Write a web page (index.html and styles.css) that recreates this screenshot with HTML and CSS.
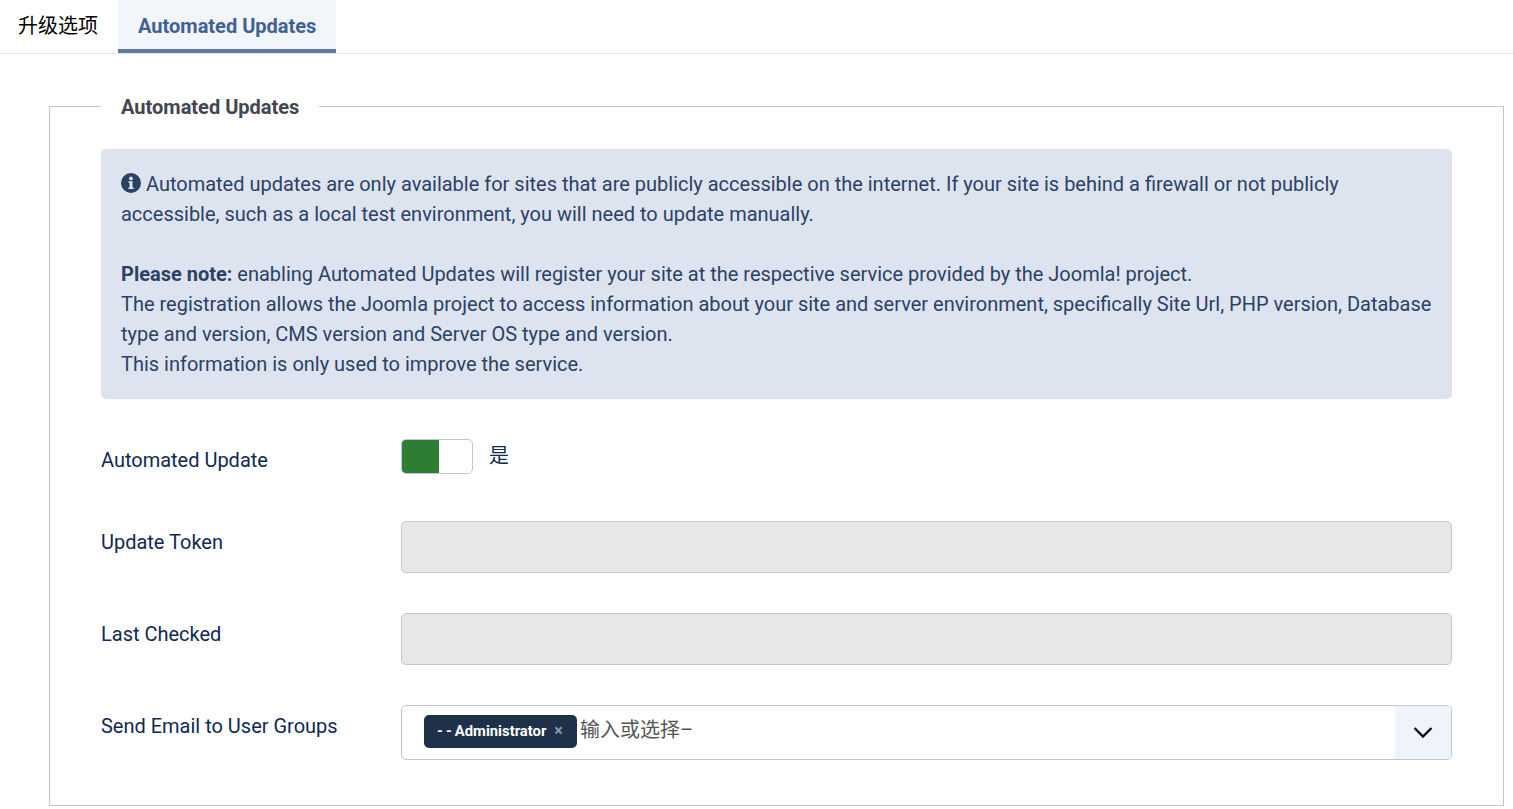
FILE: index.html
```html
<!DOCTYPE html>
<html lang="zh">
<head>
<meta charset="utf-8">
<title>Automated Updates</title>
<link rel="stylesheet" href="styles.css">
</head>
<body>
<div class="tabs">
  <div class="tab">升级选项</div>
  <div class="tab active">Automated Updates</div>
</div>
<div class="panel">
  <fieldset class="group">
    <legend>Automated Updates</legend>
    <div class="alert">
      <svg class="info" viewBox="0 0 20 20" width="20" height="20" aria-hidden="true"><circle cx="10" cy="10" r="10" fill="currentColor"/><circle cx="10" cy="5.4" r="1.9" fill="#dde4f0"/><path d="M7.6 8.3h3.9v6.1h1.1v1.7H7.5v-1.7h1.1v-4.4H7.6z" fill="#dde4f0"/></svg>
      Automated updates are only available for sites that are publicly accessible on the internet. If your site is behind a firewall or not publicly accessible, such as a local test environment, you will need to update manually.<br><br>
      <strong>Please note:</strong> enabling Automated Updates will register your site at the respective service provided by the Joomla! project.<br>
      The registration allows the Joomla project to access information about your site and server environment, specifically Site Url, PHP version, Database type and version, CMS version and Server OS type and version.<br>
      This information is only used to improve the service.
    </div>
    <div class="row row-first">
      <label class="label">Automated Update</label>
      <div class="control switch-line">
        <span class="switch"><span class="knob"></span></span>
        <span class="switch-text">是</span>
      </div>
    </div>
    <div class="row">
      <label class="label">Update Token</label>
      <div class="control"><div class="input"></div></div>
    </div>
    <div class="row">
      <label class="label">Last Checked</label>
      <div class="control"><div class="input"></div></div>
    </div>
    <div class="row">
      <label class="label">Send Email to User Groups</label>
      <div class="control">
        <div class="select">
          <div class="select-inner">
            <span class="chip">- - Administrator<span class="chip-x">×</span></span>
            <span class="placeholder">输入或选择–</span>
          </div>
          <div class="select-btn">
            <svg viewBox="0 0 20 13" width="20" height="13" aria-hidden="true"><path d="M1.500 2 10 10.500 18.500 2" fill="none" stroke="#111" stroke-width="2.4"/></svg>
          </div>
        </div>
      </div>
    </div>
  </fieldset>
</div>
</body>
</html>
```
FILE: styles.css
```css
* { box-sizing: border-box; }
html, body { margin: 0; padding: 0; height: 809px; overflow: hidden; background: #fff; }
body {
  font-family: Roboto, "Noto Sans CJK SC", sans-serif;
  font-size: 19.99px;
  line-height: 30px;
  color: #0f2a52;
}
.tabs {
  display: flex;
  height: 54px;
  border-bottom: 1px solid #dfe5ef;
}
.tab {
  height: 53px;
  padding: 11px 20px 0 18px;
  font-size: 20px;
  line-height: 30px;
  color: #000;
}
.tab.active {
  padding: 11px 20px 0 20px;
  background: #f2f5fa;
  border-bottom: 4px solid #5d7ba6;
  color: #3f6196;
  font-weight: 700;
}
.panel { padding: 37px 9px 0 49px; }
.group {
  margin: 0;
  padding: 27px 51px 45px;
  border: 1px solid #b9c8df;
  min-width: 0;
}
legend {
  padding: 1px 20px 0;
  font-size: 20px;
  font-weight: 700;
  color: #42464f;
  line-height: 30px;
}
.alert {
  padding: 20px;
  height: 250px;
  background: #dde4f0;
  border-radius: 5px;
  color: #2b4265;
}
.info { vertical-align: -2px; color: #2b4265; }
.row {
  display: grid;
  grid-template-columns: 300px 1fr;
  margin-top: 40px;
}
.label { padding-top: 6px; line-height: 30px; }
.switch-line {
  display: flex;
  align-items: flex-start;
  gap: 16px;
  height: 42px;
}
.switch {
  display: block;
  width: 72px;
  height: 35px;
  border: 1px solid #b9c8df;
  border-radius: 5px;
  background: #fff;
  overflow: hidden;
}
.knob { display: block; width: 37px; height: 100%; background: #2e7d32; }
.switch-text { line-height: 35px; }
.input {
  height: 52px;
  background: #e7e7e7;
  border: 1px solid #b9c8df;
  border-radius: 5px;
}
.select {
  display: flex;
  height: 55px;
  border: 1px solid #b9c8df;
  border-radius: 5px;
  overflow: hidden;
}
.select-inner {
  flex: 1;
  display: flex;
  align-items: flex-start;
  padding: 9px 0 0 22px;
  gap: 3px;
}
.chip {
  width: 153px;
  height: 33px;
  padding: 0 0 0 13px;
  background: #1f304a;
  border-radius: 5px;
  color: #fff;
  font-size: 14.8px;
  font-weight: 700;
  word-spacing: -0.6px;
  line-height: 32px;
  white-space: nowrap;
}
.chip-x { margin-left: 8px; font-size: 16px; color: #8e97a5; }
.placeholder { color: #555; line-height: 30px; }
.select-btn {
  width: 56px;
  background: #eff4fb;
  display: flex;
  align-items: center;
  justify-content: center;
}
```
